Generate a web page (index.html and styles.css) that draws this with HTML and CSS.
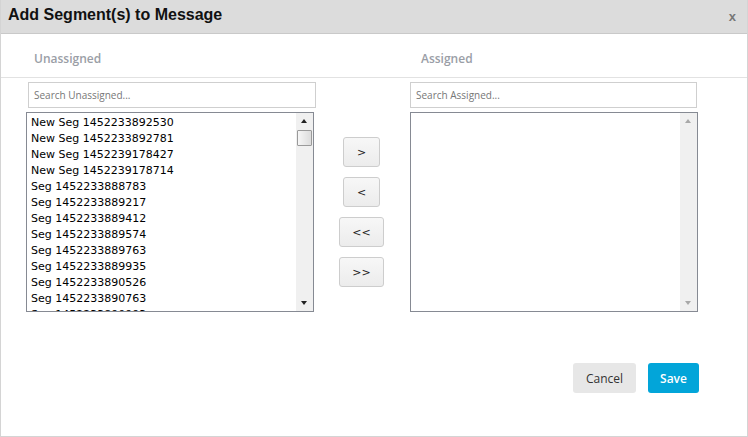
FILE: index.html
```html
<!DOCTYPE html>
<html>
<head>
<meta charset="utf-8">
<link rel="stylesheet" href="styles.css">
</head>
<body>
<div class="dialog">
  <div class="header">
    <div class="title">Add Segment(s) to Message</div>
    <div class="close">x</div>
  </div>
  <div class="labels">
    <div class="label label-left">Unassigned</div>
    <div class="label label-right">Assigned</div>
  </div>
  <div class="columns">
    <div class="col col-left">
      <div class="search search-left">Search Unassigned...</div>
      <div class="listbox">
        <div class="items">
          <div class="item">New Seg 1452233892530</div>
          <div class="item">New Seg 1452233892781</div>
          <div class="item">New Seg 1452239178427</div>
          <div class="item">New Seg 1452239178714</div>
          <div class="item">Seg 1452233888783</div>
          <div class="item">Seg 1452233889217</div>
          <div class="item">Seg 1452233889412</div>
          <div class="item">Seg 1452233889574</div>
          <div class="item">Seg 1452233889763</div>
          <div class="item">Seg 1452233889935</div>
          <div class="item">Seg 1452233890526</div>
          <div class="item">Seg 1452233890763</div>
          <div class="item">Seg 1452233890993</div>
        </div>
        <div class="scrollbar">
          <div class="arrow up"></div>
          <div class="thumb"></div>
          <div class="track"></div>
          <div class="arrow down"></div>
        </div>
      </div>
    </div>
    <div class="col col-mid">
      <button class="mv narrow">&gt;</button>
      <button class="mv narrow">&lt;</button>
      <button class="mv wide">&lt;&lt;</button>
      <button class="mv wide">&gt;&gt;</button>
    </div>
    <div class="col col-right">
      <div class="search search-right">Search Assigned...</div>
      <div class="listbox listbox-right">
        <div class="items"></div>
        <div class="scrollbar disabled">
          <div class="arrow up"></div>
          <div class="track"></div>
          <div class="arrow down"></div>
        </div>
      </div>
    </div>
  </div>
  <div class="footer">
    <button class="btn cancel">Cancel</button>
    <button class="btn save">Save</button>
  </div>
</div>
</body>
</html>
```

FILE: styles.css
```css
* { box-sizing: border-box; }
html, body { margin: 0; padding: 0; background: #fff; }
.dialog {
  width: 748px;
  height: 437px;
  border: 1px solid #d4d4d4;
  border-top: none;
  display: flex;
  flex-direction: column;
  font-family: "Open Sans", sans-serif;
}
.header {
  height: 34px;
  background: #dcdcdc;
  border-bottom: 1px solid #c9c9c9;
  display: flex;
  align-items: center;
  justify-content: space-between;
  padding: 0 11px 0 7px;
}
.title {
  font-family: "Liberation Sans", Arial, sans-serif;
  font-weight: bold;
  font-size: 16px;
  color: #111;
  margin-top: -3px;
}
.close {
  font-family: "Liberation Sans", Arial, sans-serif;
  font-weight: bold;
  font-size: 13px;
  color: #777;
  margin-top: -1px;
}
.labels {
  height: 44px;
  border-bottom: 1px solid #e2e2e2;
  display: flex;
  padding-top: 16px;
}
.label {
  font-size: 12px;
  font-weight: 600;
  color: #9a9ea6;
  line-height: 18px;
}
.label-left { margin-left: 33px; width: 387px; }
.columns {
  display: flex;
  padding-left: 25px;
  padding-top: 4px;
  height: 235px;
}
.col { display: flex; flex-direction: column; }
.col-left { width: 290px; }
.col-right { width: 291px; }
.col-mid {
  width: 94px;
  padding-right: 3px;
  align-items: center;
  padding-top: 55px;
  gap: 10px;
}
.search {
  height: 26px;
  border: 1px solid #cfcfcf;
  font-size: 10px;
  color: #777;
  line-height: 24px;
  padding-left: 5px;
}
.search-left { margin-left: 2px; width: 288px; }
.search-right { width: 287px; }
.listbox {
  margin-top: 4px;
  height: 200px;
  width: 288px;
  border: 1px solid #868a93;
  display: flex;
  overflow: hidden;
}
.items {
  flex: 1;
  padding: 2px 0 0 4px;
  overflow: hidden;
  font-family: "DejaVu Sans", sans-serif;
  font-size: 11px;
  color: #000;
}
.item { line-height: 16px; white-space: nowrap; }
.scrollbar {
  width: 17px;
  background: #f0f0f0;
  display: flex;
  flex-direction: column;
  align-items: center;
}
.arrow {
  width: 17px;
  height: 17px;
  position: relative;
}
.arrow::after {
  content: "";
  position: absolute;
  left: 5px;
  width: 0; height: 0;
  border-left: 3.5px solid transparent;
  border-right: 3.5px solid transparent;
}
.arrow.up::after { top: 6px; border-bottom: 4px solid #222; }
.arrow.down::after { top: 7px; border-top: 4px solid #222; }
.disabled .arrow.up::after { border-bottom-color: #a8a8a8; }
.disabled .arrow.down::after { border-top-color: #a8a8a8; }
.thumb {
  width: 15px;
  height: 16px;
  border: 1px solid #9a9a9a;
  background: linear-gradient(to right, #f6f6f6, #dcdcdc);
  border-radius: 1px;
}
.track { flex: 1; }
.mv {
  height: 30px;
  border: 1px solid #cdcdcd;
  border-radius: 3px;
  background: linear-gradient(#f7f7f7, #ececec);
  font-family: "DejaVu Sans", sans-serif;
  font-size: 11px;
  color: #222;
  padding: 0;
}
.narrow { width: 37px; }
.wide { width: 45px; }
.footer {
  display: flex;
  justify-content: flex-end;
  gap: 12px;
  padding-right: 48px;
  padding-top: 50px;
}
.btn {
  height: 30px;
  border: none;
  border-radius: 3px;
  font-family: "Open Sans", sans-serif;
  font-size: 12px;
  padding: 0;
}
.cancel { width: 63px; background: #e7e7e7; color: #333; }
.save { width: 51px; background: #02a5d9; color: #fff; font-weight: 600; }
```
